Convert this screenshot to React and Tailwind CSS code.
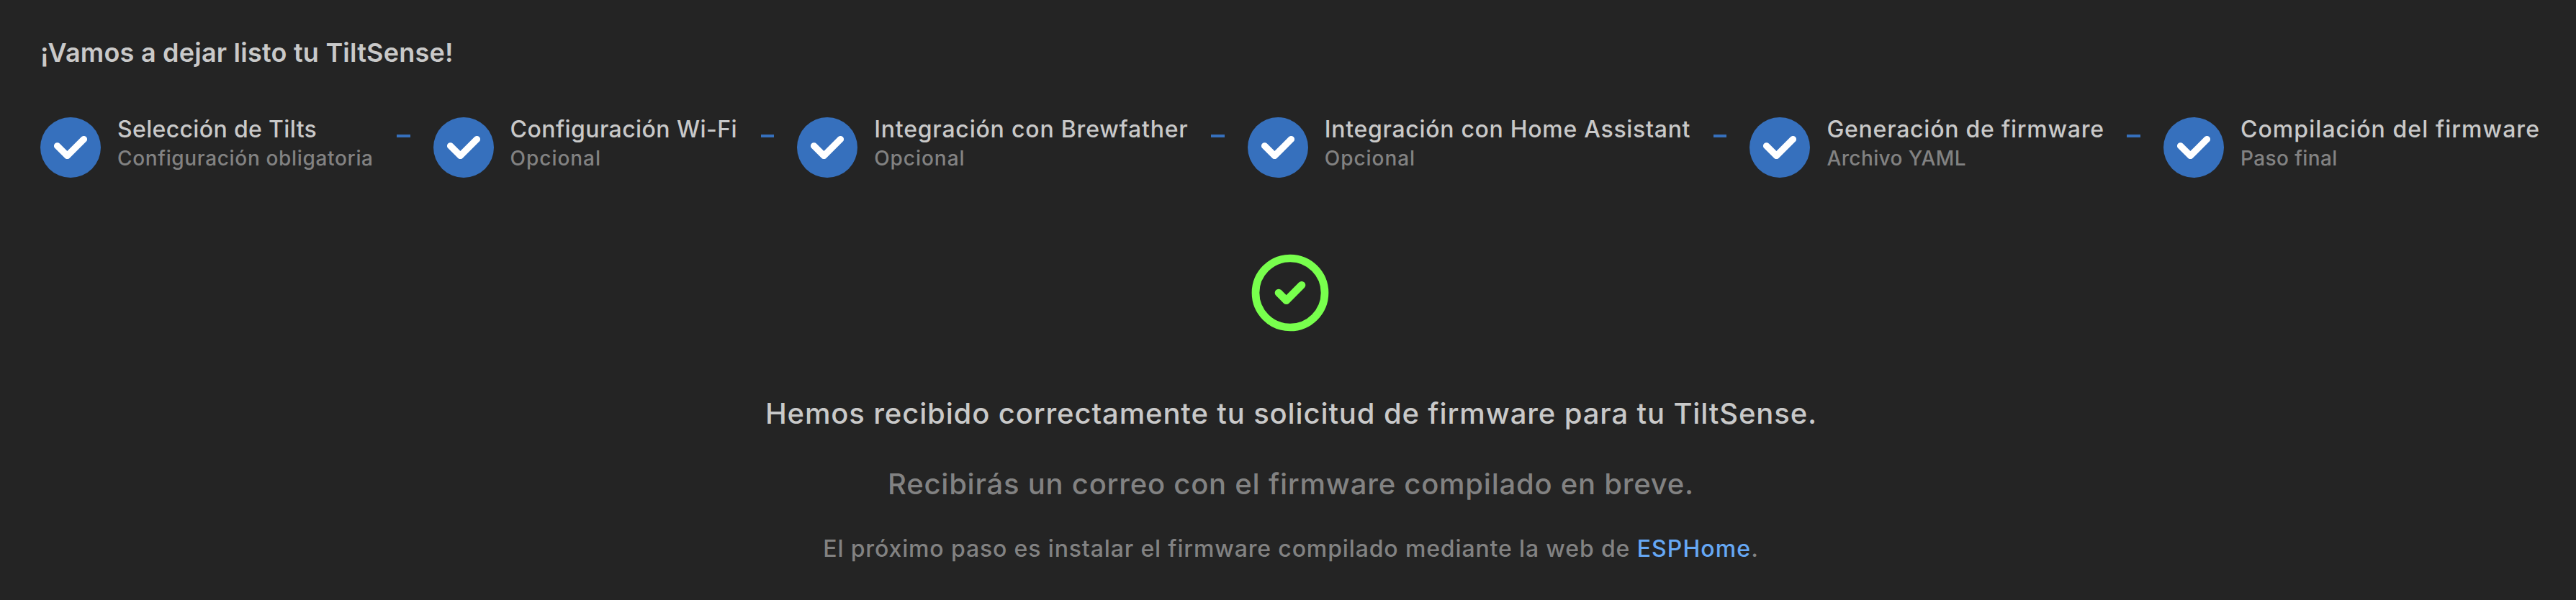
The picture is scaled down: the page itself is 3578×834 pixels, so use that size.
const STEPS = [
  { label: "Selección de Tilts", note: "Configuración obligatoria", width: "w-[463px]", labelTrack: "tracking-[0.35px]", noteTrack: "tracking-[0.66px]" },
  { label: "Configuración Wi-Fi", note: "Opcional", width: "w-[423px]", labelTrack: "tracking-[0.42px]", noteTrack: "tracking-[0.95px]" },
  { label: "Integración con Brewfather", note: "Opcional", width: "w-[543px]", labelTrack: "tracking-[0.8px]", noteTrack: "tracking-[0.95px]" },
  { label: "Integración con Home Assistant", note: "Opcional", width: "w-[615px]", labelTrack: "tracking-[0.7px]", noteTrack: "tracking-[0.95px]" },
  { label: "Generación de firmware", note: "Archivo YAML", width: "w-[492px]", labelTrack: "tracking-[0.76px]", noteTrack: "tracking-[0.4px]" },
  { label: "Compilación del firmware", note: "Paso final", width: "w-[522px]", labelTrack: "tracking-[1.05px]", noteTrack: "tracking-[0.4px]" },
];

function CheckBadge() {
  return (
    <div className="mt-[3px] flex size-[84px] shrink-0 items-center justify-center rounded-full bg-[#3670bd]">
      <svg viewBox="0 0 10 7" className="h-[32.2px] w-[46px] text-white" fill="none">
        <path
          d="M4 4.586L1.707 2.293A1 1 0 1 0 .293 3.707l3 3a.997.997 0 0 0 1.414 0l5-5A1 1 0 1 0 8.293.293L4 4.586z"
          fill="currentColor"
          fillRule="evenodd"
          clipRule="evenodd"
        />
      </svg>
    </div>
  );
}

function Step({ label, note, width, labelTrack, noteTrack }) {
  return (
    <div className={`flex shrink-0 items-start gap-[23px] whitespace-nowrap ${width}`}>
      <CheckBadge />
      <div className="font-medium">
        <div className={`text-[32px] leading-[40px] text-[#c9c9c9] ${labelTrack}`}>{label}</div>
        <div className={`text-[28px] leading-[40px] text-[#828282] ${noteTrack}`}>{note}</div>
      </div>
    </div>
  );
}

export default function App() {
  return (
    <main className="h-[834px] w-full overflow-hidden bg-[#242424] pt-[45px] pr-[50px] pl-[56px] font-['Inter',sans-serif] text-[#c9c9c9]">
      <h1 className="text-[36px] leading-[56px] font-semibold tracking-[0.22px]">¡Vamos a dejar listo tu TiltSense!</h1>

      <div className="mt-[59px] flex h-[87px] items-start">
        {STEPS.map((step, i) => (
          <div key={step.label} className="flex shrink-0 items-start">
            {i > 0 && <div className="mx-8 mt-[27px] h-1 w-[18.6px] shrink-0 bg-[#3670bd]" />}
            <Step {...step} />
          </div>
        ))}
      </div>

      <section className="mt-24 flex flex-col items-center font-medium whitespace-nowrap">
        <svg
          viewBox="0 0 24 24"
          className="size-32 text-[#78ff4d]"
          fill="none"
          stroke="currentColor"
          strokeWidth="2"
          strokeLinecap="round"
          strokeLinejoin="round"
        >
          <path d="M12 12m-9 0a9 9 0 1 0 18 0a9 9 0 1 0 -18 0" />
          <path d="M9 12l2 2l4 -4" />
        </svg>
        <p className="mt-[74px] ml-[3px] text-[40px] leading-[60px] tracking-[0.86px]">
          Hemos recibido correctamente tu solicitud de firmware para tu TiltSense.
        </p>
        <p className="mt-[38px] ml-[2px] text-[40px] leading-[60px] tracking-[0.76px] text-[#828282]">
          Recibirás un correo con el firmware compilado en breve.
        </p>
        <p className="mt-9 ml-[2px] text-[32px] leading-[48px] tracking-[0.86px] text-[#828282]">
          El próximo paso es instalar el firmware compilado mediante la web de{" "}
          <a className="tracking-[1.1px] text-[#66a8f5]">ESPHome</a>.
        </p>
      </section>
    </main>
  );
}
